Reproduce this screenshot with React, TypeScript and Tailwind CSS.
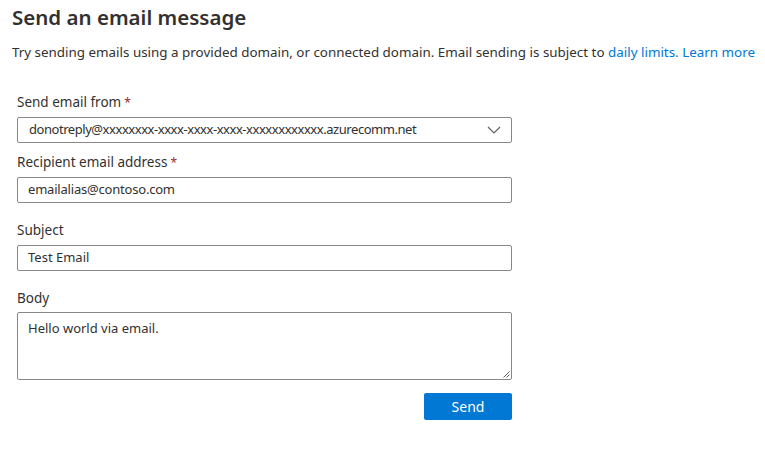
import React from 'react';

const font = { fontFamily: '"Noto Sans", "Open Sans", sans-serif' };

const Label: React.FC<{ text: string; required?: boolean }> = ({ text, required }) => (
  <div className="text-[13.5px] leading-[18px] text-[#323130]">
    {text}
    {required && <span className="text-[#a4262c] text-[12px] leading-[0]"> *</span>}
  </div>
);

export default function App() {
  return (
    <div className="w-[765px] h-[454px] bg-white px-3 pt-[3px]" style={font}>
      <h1 className="text-[20.5px] leading-[28px] font-semibold text-[#323130]">Send an email message</h1>
      <p className="mt-[12px] text-[13.4px] leading-[18px] text-[#323130] whitespace-nowrap">
        Try sending emails using a provided domain, or connected domain. Email sending is subject to{' '}
        <a className="text-[#0078d4]">daily limits.</a> <a className="text-[#0078d4]">Learn more</a>
      </p>

      <div className="ml-[5px] w-[495px] mt-[32px] flex flex-col">
        <Label text="Send email from" required />
        <div className="mt-[6px] h-[26px] border border-[#8a8886] rounded-[2px] flex items-center justify-between pl-[11px] pr-[10px] text-[13px] text-[#323130]">
          <span className="tracking-[-0.45px]">donotreply@xxxxxxxx-xxxx-xxxx-xxxx-xxxxxxxxxxxx.azurecomm.net</span>
          <svg width="14" height="8" viewBox="0 0 14 8" fill="none">
            <path d="M1 1l6 6 6-6" stroke="#605e5c" strokeWidth="1.1" />
          </svg>
        </div>

        <div className="mt-[10px]">
          <Label text="Recipient email address" required />
        </div>
        <div className="mt-[6px] h-[26px] border border-[#8a8886] rounded-[2px] flex items-center pl-[10px] text-[13px] text-[#323130] tracking-[-0.2px]">
          emailalias@contoso.com
        </div>

        <div className="mt-[18px]">
          <Label text="Subject" />
        </div>
        <div className="mt-[6px] h-[26px] border border-[#8a8886] rounded-[2px] flex items-center pl-[10px] text-[13px] text-[#323130]">
          Test Email
        </div>

        <div className="mt-[18px]">
          <Label text="Body" />
        </div>
        <div className="relative mt-[5px] h-[68px] border border-[#8a8886] rounded-[2px] pl-[10px] pt-[6px] text-[13px] text-[#323130]">
          Hello world via email.
          <svg className="absolute right-[1px] bottom-[1px]" width="7" height="7" viewBox="0 0 7 7">
            <path d="M6.5 0.5L0.5 6.5M6.5 3.5L3.5 6.5" stroke="#605e5c" strokeWidth="1" />
          </svg>
        </div>

        <div className="mt-[13px] flex justify-end">
          <button className="w-[88px] h-[27px] bg-[#0078d4] rounded-[2px] text-white text-[14px]">Send</button>
        </div>
      </div>
    </div>
  );
}
